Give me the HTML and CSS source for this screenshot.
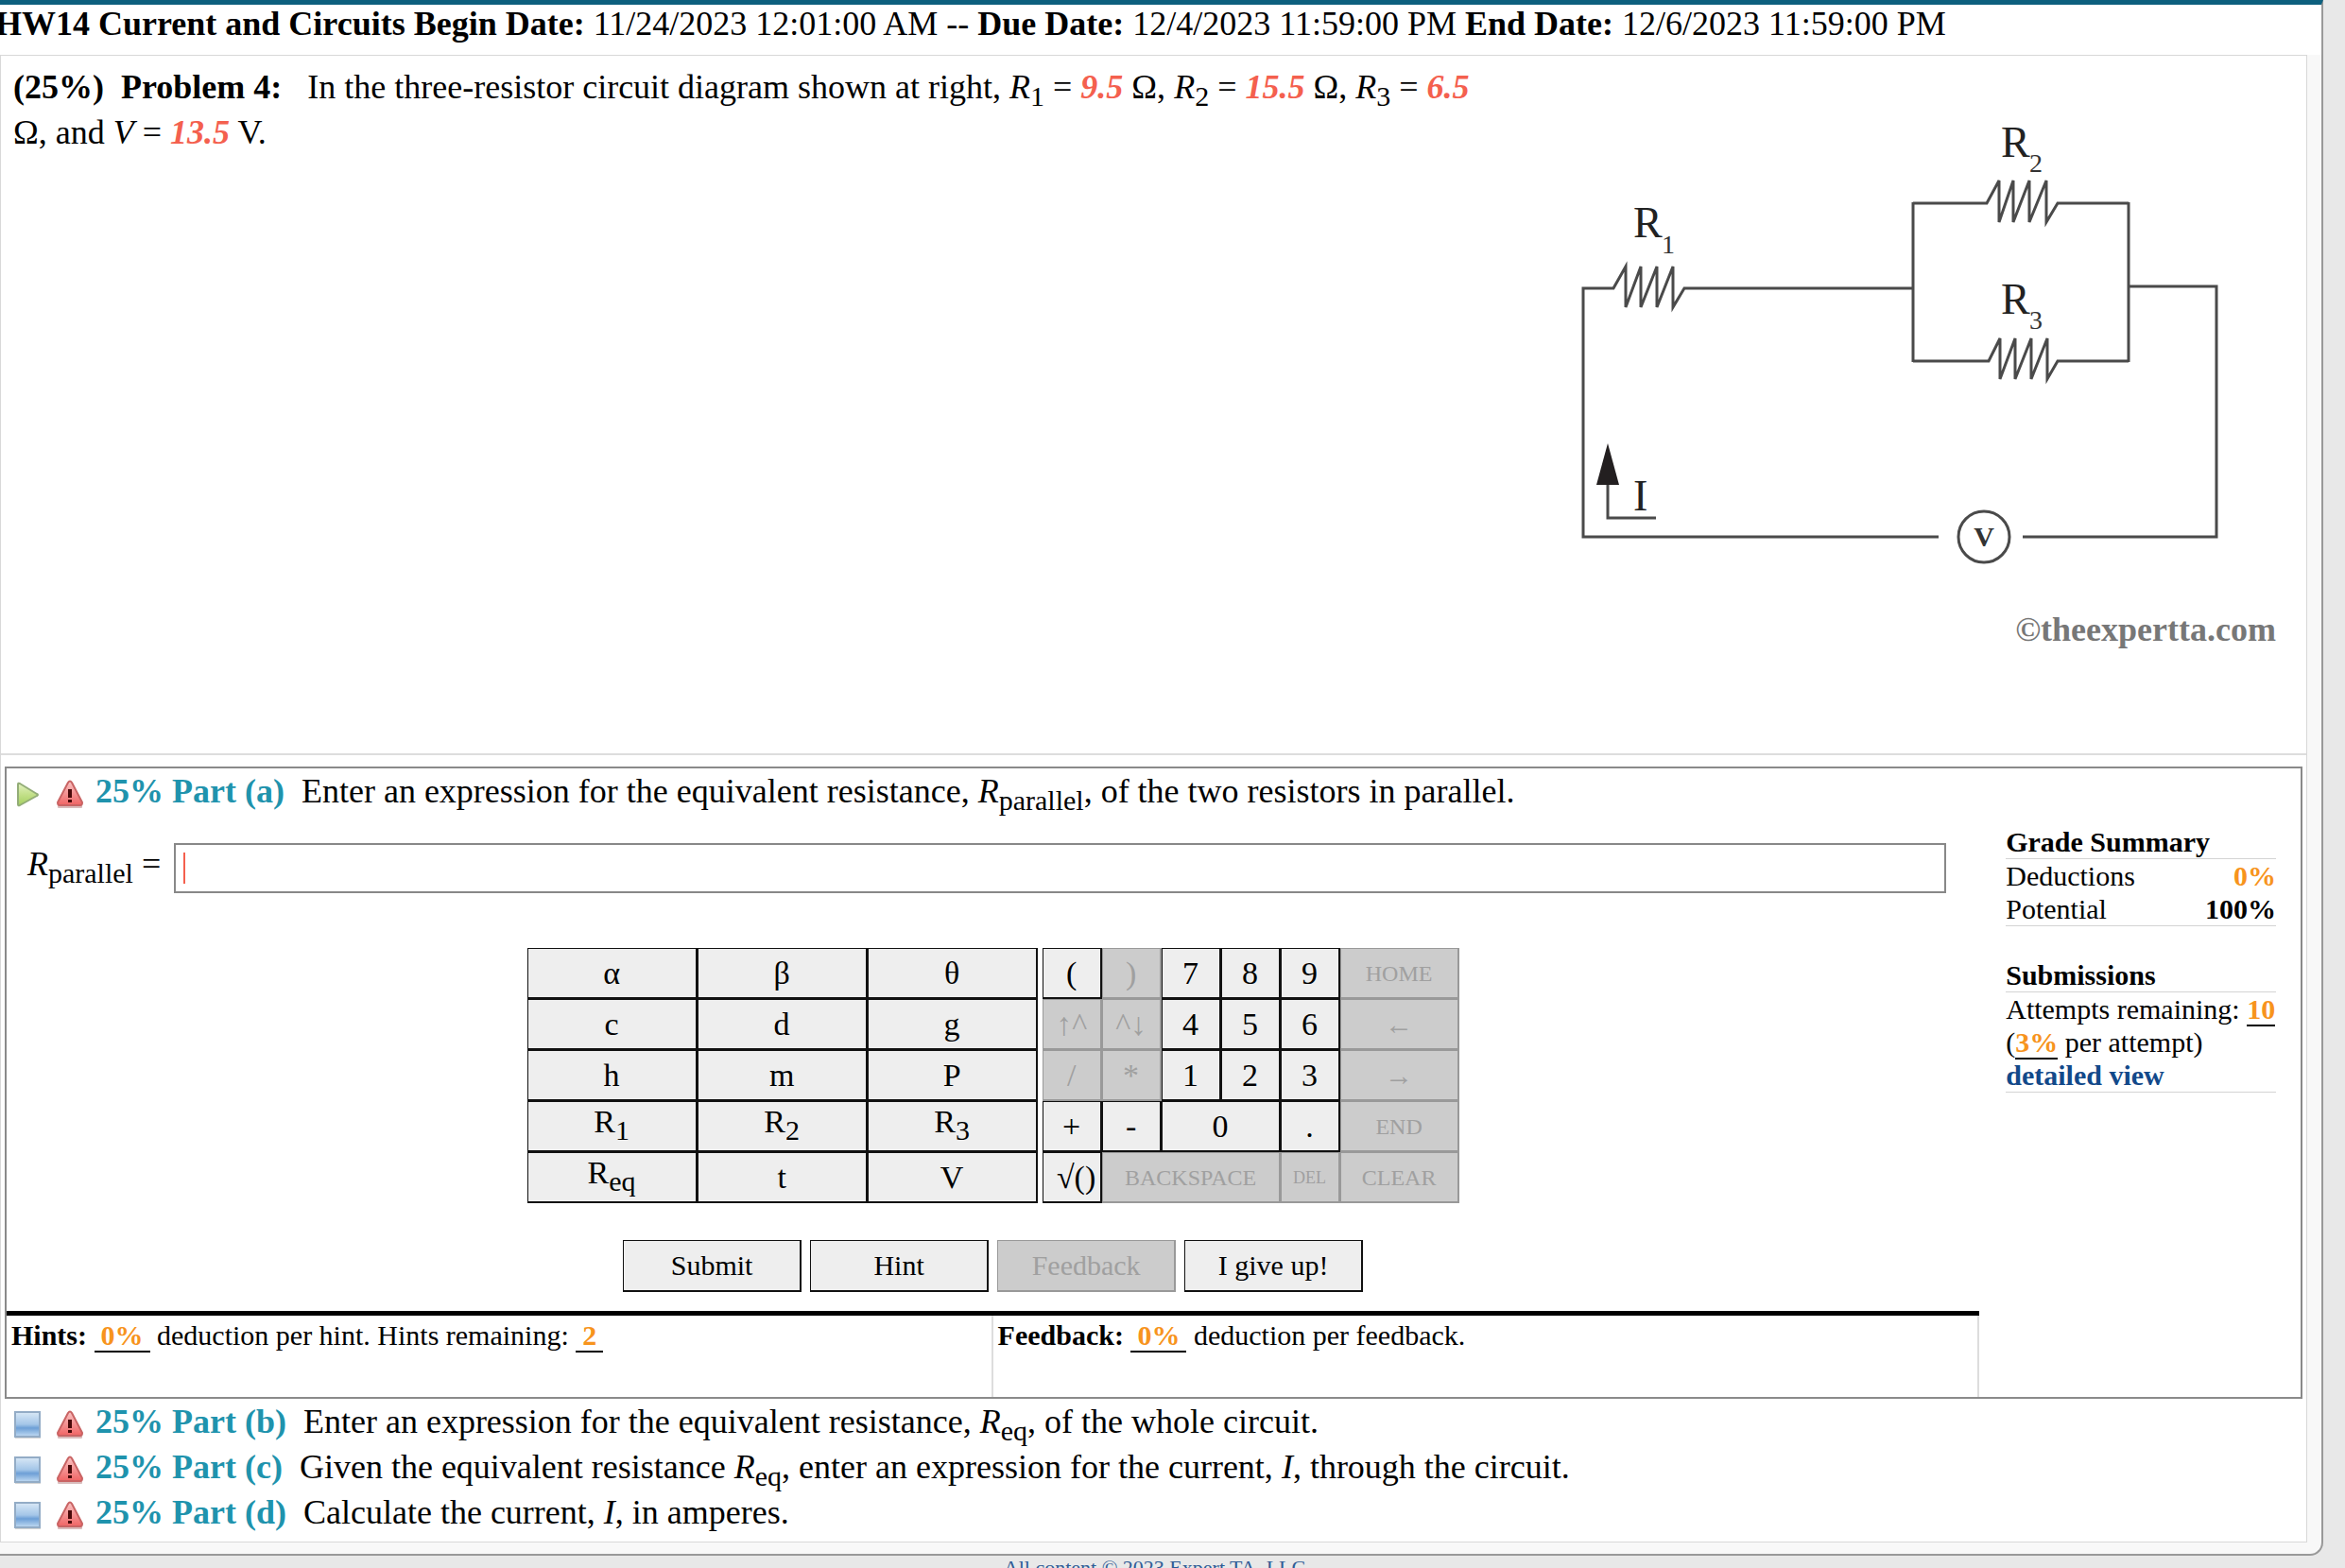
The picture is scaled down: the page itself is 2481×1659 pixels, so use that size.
FILE: index.html
```
<!DOCTYPE html>
<html lang="en">
<head>
    <meta charset="UTF-8">
    <meta name="viewport" content="width=device-width, initial-scale=1.0">
    <title>HW14 Current and Circuits</title>
    <link rel="stylesheet" href="styles.css">
</head>
<body>
    <!-- Shared icons -->
    <svg class="sprite" aria-hidden="true">
        <defs>
            <linearGradient id="green" x1="0" y1="0" x2="0" y2="1">
                <stop offset="0" stop-color="#e3f2c0"/>
                <stop offset="0.5" stop-color="#c3e08a"/>
                <stop offset="1" stop-color="#a5d060"/>
            </linearGradient>
            <linearGradient id="red" x1="0" y1="0" x2="0" y2="1">
                <stop offset="0" stop-color="#f9c4c4"/>
                <stop offset="1" stop-color="#f06464"/>
            </linearGradient>
            <linearGradient id="blue" x1="0" y1="0" x2="0" y2="1">
                <stop offset="0" stop-color="#d9e8f6"/>
                <stop offset="0.5" stop-color="#a4c6e8"/>
                <stop offset="0.65" stop-color="#6d9fd6"/>
                <stop offset="1" stop-color="#c3dcf3"/>
            </linearGradient>
            <symbol id="play" viewBox="0 0 28 30">
                <path d="M4 5 Q4 3 6 4 L24 15 Q26 16 24 17 L6 27 Q4 28 4 26 Z" fill="url(#green)" stroke="#93ad78" stroke-width="2" stroke-linejoin="round"/>
            </symbol>
            <symbol id="square" viewBox="0 0 28 30">
                <rect x="1" y="28" width="27" height="2" fill="#d4d4d4"/>
                <rect x="1" y="2" width="26" height="26" fill="url(#blue)" stroke="#93acc6" stroke-width="2"/>
            </symbol>
            <symbol id="warn" viewBox="0 0 28 30">
                <rect x="1" y="27" width="26" height="3" rx="1" fill="#d9bcbc"/>
                <path d="M12 3 Q14 0 16 3 L27 24 Q27 27 25 27 L3 27 Q1 27 1 24 Z" fill="url(#red)" stroke="#c96464" stroke-width="2" stroke-linejoin="round"/>
                <path d="M12 10 h4 v9 h-4 Z M12 21 h4 v3 h-4 Z" fill="#4a0a0a"/>
            </symbol>
        </defs>
    </svg>

    <div class="page">
        <h1 class="assignment"><b>HW14 Current and Circuits Begin Date:</b> 11/24/2023 12:01:00 AM -- <b>Due Date:</b> 12/4/2023 11:59:00 PM <b>End Date:</b> 12/6/2023 11:59:00 PM</h1>

        <div class="content">
            <div class="problem">
                <p class="problem-text"><b>(25%)&nbsp; Problem 4:</b> &nbsp; In the three-resistor circuit diagram shown at right, <i>R</i><sub>1</sub> = <em>9.5</em> Ω, <i>R</i><sub>2</sub> = <em>15.5</em> Ω, <i>R</i><sub>3</sub> = <em>6.5</em> Ω, and <i>V</i> = <em>13.5</em> V.</p>
                <svg class="circuit" viewBox="0 0 800 620" role="img" aria-label="Circuit diagram">
                    <g fill="none" stroke="#4a4a4a" stroke-width="3">
                        <path d="M411 479 H35 V216 H67 L80 193 V236 L96 193 V236 L113 193 V236 L130 193 V236 L142 216 H384"/>
                        <path d="M384 126 H462 L475 102 V146 L490 102 V146 L507 102 V146 L525 102 V146 L537 126 H612"/>
                        <path d="M384 293 H464 L476 269 V312 L492 269 V312 L509 269 V312 L526 269 V312 L537 293 H612"/>
                        <path d="M384 125 V294 M612 125 V294"/>
                        <path d="M612 214 H705 V479 H500"/>
                        <path d="M61 422 V459 H112"/>
                        <circle cx="459" cy="479" r="27"/>
                    </g>
                    <path d="M61 380 L73 424 H49 Z" fill="#231f20"/>
                    <g class="circuit-label">
                        <text x="88" y="162">R</text>
                        <text x="477" y="77">R</text>
                        <text x="477" y="243">R</text>
                        <text x="88" y="451">I</text>
                    </g>
                    <g class="circuit-sub">
                        <text x="118" y="179">1</text>
                        <text x="507" y="93">2</text>
                        <text x="507" y="259">3</text>
                    </g>
                    <text class="circuit-volt" x="459" y="489">V</text>
                    <text class="circuit-copy" x="768" y="589">©theexpertta.com</text>
                </svg>
            </div>

            <div class="answer">
                <div class="work">
                    <div class="part">
                        <svg class="icon"><use href="#play"/></svg>
                        <svg class="icon"><use href="#warn"/></svg>
                        <p><b>25% Part (a)</b>&nbsp; Enter an expression for the equivalent resistance, <i>R</i><sub>parallel</sub>, of the two resistors in parallel.</p>
                    </div>

                    <div class="entry">
                        <label for="expression"><i>R</i><sub>parallel</sub> =</label>
                        <input type="text" id="expression">
                    </div>

                    <div class="keypad">
                        <div class="symbols">
                            <button>α</button><button>β</button><button>θ</button>
                            <button>c</button><button>d</button><button>g</button>
                            <button>h</button><button>m</button><button>P</button>
                            <button>R<sub>1</sub></button><button>R<sub>2</sub></button><button>R<sub>3</sub></button>
                            <button>R<sub>eq</sub></button><button>t</button><button>V</button>
                        </div>
                        <div class="numbers">
                            <button>(</button><button disabled>)</button><button>7</button><button>8</button><button>9</button><button class="word" disabled>HOME</button>
                            <button disabled>↑^</button><button disabled>^↓</button><button>4</button><button>5</button><button>6</button><button class="arrow" disabled>←</button>
                            <button disabled>/</button><button disabled>*</button><button>1</button><button>2</button><button>3</button><button class="arrow" disabled>→</button>
                            <button>+</button><button>-</button><button class="two">0</button><button>.</button><button class="word" disabled>END</button>
                            <button class="root">√()</button><button class="word three" disabled>BACKSPACE</button><button class="small" disabled>DEL</button><button class="word" disabled>CLEAR</button>
                        </div>
                    </div>

                    <div class="actions">
                        <button>Submit</button>
                        <button>Hint</button>
                        <button disabled>Feedback</button>
                        <button>I give up!</button>
                    </div>

                    <div class="deductions">
                        <p><b>Hints:</b> <span class="amount">0%</span> deduction per hint. Hints remaining: <span class="amount">2</span></p>
                        <p><b>Feedback:</b> <span class="amount">0%</span> deduction per feedback.</p>
                    </div>
                </div>

                <div class="summary">
                    <h2>Grade Summary</h2>
                    <div class="summary-box">
                        <div class="summary-row"><span>Deductions</span><b class="orange">0%</b></div>
                        <div class="summary-row"><span>Potential</span><b>100%</b></div>
                    </div>
                    <h2>Submissions</h2>
                    <div class="summary-box">
                        <div class="attempts">Attempts remaining: <span class="count">10</span></div>
                        <div>(<span class="count">3%</span> per attempt)</div>
                        <a href="#">detailed view</a>
                    </div>
                </div>
            </div>

            <div class="parts">
                <div class="part">
                    <svg class="icon"><use href="#square"/></svg>
                    <svg class="icon"><use href="#warn"/></svg>
                    <p><b>25% Part (b)</b>&nbsp; Enter an expression for the equivalent resistance, <i>R</i><sub>eq</sub>, of the whole circuit.</p>
                </div>
                <div class="part">
                    <svg class="icon"><use href="#square"/></svg>
                    <svg class="icon"><use href="#warn"/></svg>
                    <p><b>25% Part (c)</b>&nbsp; Given the equivalent resistance <i>R</i><sub>eq</sub>, enter an expression for the current, <i>I</i>, through the circuit.</p>
                </div>
                <div class="part">
                    <svg class="icon"><use href="#square"/></svg>
                    <svg class="icon"><use href="#warn"/></svg>
                    <p><b>25% Part (d)</b>&nbsp; Calculate the current, <i>I</i>, in amperes.</p>
                </div>
            </div>
        </div>
    </div>

    <footer><a href="#">All content © 2023 Expert TA, LLC</a></footer>
</body>
</html>
```
FILE: styles.css
```
* {
    box-sizing: border-box;
}

body {
    margin: 0;
    background-color: #e8e8e8;
    color: #000;
    font-family: "Liberation Serif", "Times New Roman", serif;
    font-size: 36px;
    line-height: 48px;
}

p, h1, h2 {
    margin: 0;
}

sub {
    font-size: 30px;
    line-height: 0;
}

button, input {
    font-family: inherit;
    border-radius: 0;
}

.sprite {
    position: absolute;
    width: 0;
    height: 0;
}

.page {
    margin-right: 23px;
    padding: 0 15px 12px 0;
    background-color: #f8f8f8;
    border-top: 5px solid #0d607e;
    border-right: 2px solid #999;
    border-bottom: 2px solid #999;
    border-bottom-right-radius: 14px;
}

.assignment {
    height: 53px;
    margin: 0 -15px 0 -5px;
    background-color: #fff;
    font-size: 36px;
    font-weight: normal;
    line-height: 41px;
    white-space: nowrap;
}

.content {
    background-color: #fff;
    border: 1px solid #d8d8d8;
}

/* Problem statement and diagram */
.problem {
    display: grid;
    grid-template-columns: 65% 35%;
    padding: 9px 0 88px;
    border-bottom: 2px solid #ddd;
}

.problem-text {
    padding-left: 13px;
}

.problem-text em {
    color: #f4604e;
    font-weight: bold;
}

.circuit {
    justify-self: end;
    width: 800px;
    max-width: 100%;
    margin-top: 21px;
}

.circuit-label {
    font-size: 46px;
    fill: #222;
}

.circuit-sub {
    font-size: 28px;
    fill: #333;
}

.circuit-volt {
    font-size: 30px;
    font-weight: bold;
    text-anchor: middle;
    fill: #333;
}

.circuit-copy {
    font-size: 36px;
    font-weight: bold;
    text-anchor: end;
    fill: #777;
}

/* Active part */
.answer {
    display: grid;
    grid-template-columns: 86% 14%;
    margin: 12px 4px 0;
    border: 2px solid #8a8a8a;
}

.part {
    display: flex;
    align-items: center;
    padding-left: 14px;
}

.work .part {
    padding-left: 8px;
}

.part p {
    margin-left: -4px;
}

.part b {
    color: #1f93ad;
}

.icon {
    width: 28px;
    height: 30px;
    margin: 6px 17px 0 0;
}

.entry {
    display: flex;
    align-items: flex-start;
    gap: 14px;
    margin: 31px 35px 58px 22px;
}

.entry label {
    line-height: 44px;
}

.entry input {
    flex: 1;
    height: 53px;
    padding: 0 8px;
    border: 2px solid #888;
    font-size: 30px;
    background: linear-gradient(#f4604e, #f4604e) 8px center / 2px 33px no-repeat #fff;
}

.keypad {
    display: flex;
    justify-content: center;
    gap: 5px;
}

.symbols {
    display: grid;
    grid-template-columns: repeat(3, 180px);
    grid-auto-rows: 54px;
}

.numbers {
    display: grid;
    grid-template-columns: repeat(5, 63px) 126px;
    grid-auto-rows: 54px;
}

.keypad button, .actions button {
    padding: 0;
    border: solid #111;
    border-width: 1px 2px 2px 1px;
    background-color: #eee;
    color: #000;
    font-size: 34px;
    line-height: 38px;
}

.keypad button:disabled, .actions button:disabled {
    border-color: #999;
    background-color: #ccc;
    color: #a0a0a0;
}

.keypad sub {
    line-height: 38px;
}

.keypad .word {
    font-size: 24px;
}

.keypad .arrow {
    font-size: 30px;
}

.keypad .small {
    font-size: 18px;
}

.keypad .root {
    padding-left: 10px;
}

.two {
    grid-column: span 2;
}

.three {
    grid-column: span 3;
}

.actions {
    display: flex;
    justify-content: center;
    gap: 9px;
    margin: 39px 0 20px;
}

.actions button {
    width: 189px;
    height: 55px;
    font-size: 30px;
}

.deductions {
    display: grid;
    grid-template-columns: 1fr 1fr;
    border-top: 5px solid #000;
    font-size: 30px;
    line-height: 35px;
}

.deductions p {
    height: 86px;
    padding: 3px 5px;
    border-right: 2px solid #ddd;
}

.amount, .count {
    border-bottom: 2px solid #000;
    color: #f7941d;
    font-weight: bold;
}

.amount {
    padding: 0 7px;
}

/* Grade summary */
.summary {
    padding: 60px 26px 0 28px;
    font-size: 30px;
    line-height: 35px;
}

.summary h2 {
    border-bottom: 1px solid #d4d4d4;
    font-size: 30px;
}

.summary-box {
    margin-bottom: 34px;
    border-bottom: 1px solid #d4d4d4;
}

.summary-row {
    display: flex;
    justify-content: space-between;
}

.attempts {
    white-space: nowrap;
}

.summary a {
    display: block;
    color: #12498a;
    font-weight: bold;
    text-decoration: none;
}

.orange {
    color: #f7941d;
}

/* Remaining parts */
.parts {
    padding-bottom: 7px;
}

footer {
    margin-right: 38px;
    font-size: 22px;
    line-height: 26px;
    text-align: center;
}

footer a {
    color: #2f5c96;
    text-decoration: none;
}
```
